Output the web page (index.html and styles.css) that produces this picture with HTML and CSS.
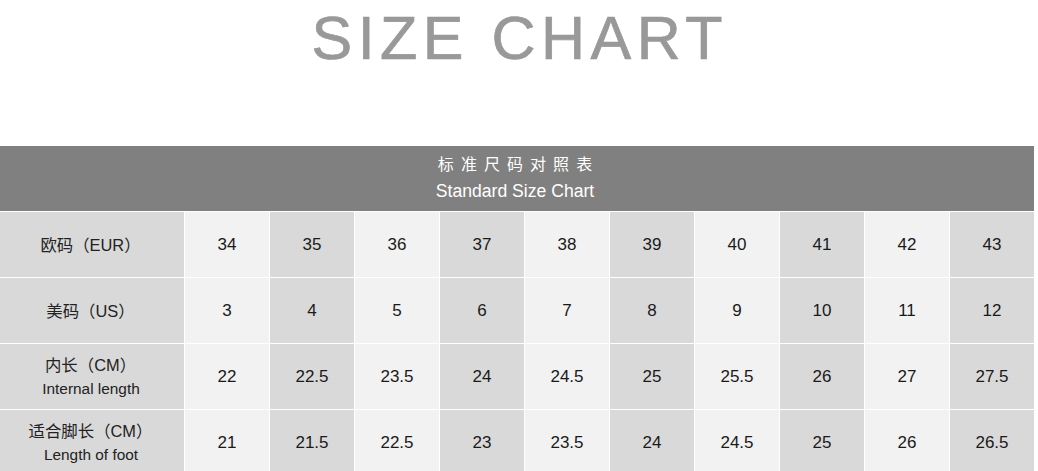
FILE: index.html
```html
<!DOCTYPE html>
<html lang="zh-CN">
<head>
<meta charset="utf-8">
<title>Size Chart</title>
<link rel="stylesheet" href="styles.css">
</head>
<body>
<div class="page">
  <h1 class="title">SIZE CHART</h1>
  <div class="chart">
    <div class="chart-head">
      <div class="head-cn">标 准 尺 码 对 照 表</div>
      <div class="head-en">Standard Size Chart</div>
    </div>

    <div class="label"><span class="cn">欧码（EUR）</span></div>
    <div class="cell light">34</div><div class="cell dark">35</div><div class="cell light">36</div><div class="cell dark">37</div><div class="cell light">38</div><div class="cell dark">39</div><div class="cell light">40</div><div class="cell dark">41</div><div class="cell light">42</div><div class="cell dark">43</div>

    <div class="label"><span class="cn">美码（US）</span></div>
    <div class="cell light">3</div><div class="cell dark">4</div><div class="cell light">5</div><div class="cell dark">6</div><div class="cell light">7</div><div class="cell dark">8</div><div class="cell light">9</div><div class="cell dark">10</div><div class="cell light">11</div><div class="cell dark">12</div>

    <div class="label"><span class="cn">内长（CM）</span><span class="en">Internal length</span></div>
    <div class="cell light">22</div><div class="cell dark">22.5</div><div class="cell light">23.5</div><div class="cell dark">24</div><div class="cell light">24.5</div><div class="cell dark">25</div><div class="cell light">25.5</div><div class="cell dark">26</div><div class="cell light">27</div><div class="cell dark">27.5</div>

    <div class="label"><span class="cn">适合脚长（CM）</span><span class="en">Length of foot</span></div>
    <div class="cell light">21</div><div class="cell dark">21.5</div><div class="cell light">22.5</div><div class="cell dark">23</div><div class="cell light">23.5</div><div class="cell dark">24</div><div class="cell light">24.5</div><div class="cell dark">25</div><div class="cell light">26</div><div class="cell dark">26.5</div>
  </div>
</div>
</body>
</html>
```

FILE: styles.css
```css
html, body {
  margin: 0;
  padding: 0;
  background: #ffffff;
}

body {
  font-family: "Liberation Sans", Arial, "Noto Sans CJK SC", sans-serif;
  overflow: hidden;
}

.page {
  width: 1034px;
}

.title {
  margin: 0;
  height: 146px;
  box-sizing: border-box;
  padding-top: 8px;
  font-size: 61px;
  line-height: 61px;
  font-weight: normal;
  letter-spacing: 5.5px;
  text-indent: 5.5px;
  color: #999999;
  -webkit-text-stroke: 0.7px #999999;
  text-align: center;
}

.chart {
  display: grid;
  grid-template-columns: 184px repeat(10, 84px);
  grid-auto-rows: 65px;
  gap: 1px;
  background: #ffffff;
}

.chart-head {
  grid-column: 1 / -1;
  background: #808080;
  color: #ffffff;
  display: flex;
  flex-direction: column;
  align-items: center;
  justify-content: center;
  line-height: 26px;
}

.head-cn {
  font-family: "Liberation Sans", "Noto Sans CJK SC", sans-serif;
  font-size: 16px;
  letter-spacing: 1.3px;
  text-indent: 1.3px;
  margin-top: -1px;
  margin-left: -4px;
}

.head-en {
  font-size: 17.6px;
  margin-left: -4px;
}

.label {
  background: #d9d9d9;
  color: #222222;
  display: flex;
  flex-direction: column;
  align-items: center;
  justify-content: center;
  line-height: 24px;
}

.label .cn {
  font-family: "Liberation Sans", "Noto Sans CJK SC", sans-serif;
  font-size: 16.4px;
  margin-left: -3px;
}

.label .en {
  font-size: 15.4px;
  margin-left: -2px;
}

.cell {
  display: flex;
  align-items: center;
  justify-content: center;
  font-size: 17px;
  color: #1a1a1a;
}

.light {
  background: #f2f2f2;
}

.dark {
  background: #d9d9d9;
}
```
